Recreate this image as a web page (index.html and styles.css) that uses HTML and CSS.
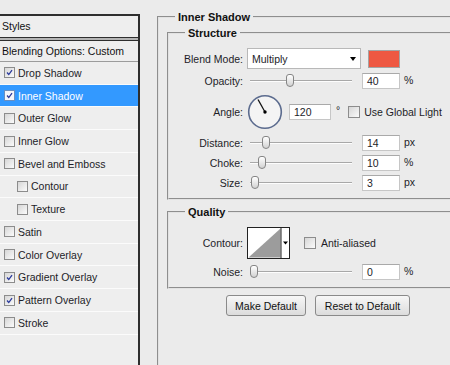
FILE: index.html
```html
<!DOCTYPE html>
<html>
  <head>
    <title>Layer Style - Inner Shadow</title>
    <link rel="stylesheet" href="styles.css">
  </head>
  <body>
    <div class="dialog">
      <div class="styles-panel">
        <div class="panel-title">Styles</div>
        <div class="panel-rule"></div>
        <div class="panel-blending">Blending Options: Custom</div>
        <ul class="effect-list">
          <li class="effect"><span class="check"><svg viewBox="0 0 11 11"><path d="M2.5 5.5 L4.6 8 L8.6 2.6" /></svg></span>Drop Shadow</li>
          <li class="effect selected"><span class="check"><svg viewBox="0 0 11 11"><path d="M2.5 5.5 L4.6 8 L8.6 2.6" /></svg></span>Inner Shadow</li>
          <li class="effect"><span class="check"></span>Outer Glow</li>
          <li class="effect"><span class="check"></span>Inner Glow</li>
          <li class="effect"><span class="check"></span>Bevel and Emboss</li>
          <li class="effect sub"><span class="check"></span>Contour</li>
          <li class="effect sub"><span class="check"></span>Texture</li>
          <li class="effect"><span class="check"></span>Satin</li>
          <li class="effect"><span class="check"></span>Color Overlay</li>
          <li class="effect"><span class="check"><svg viewBox="0 0 11 11"><path d="M2.5 5.5 L4.6 8 L8.6 2.6" /></svg></span>Gradient Overlay</li>
          <li class="effect"><span class="check"><svg viewBox="0 0 11 11"><path d="M2.5 5.5 L4.6 8 L8.6 2.6" /></svg></span>Pattern Overlay</li>
          <li class="effect"><span class="check"></span>Stroke</li>
        </ul>
      </div>

      <div class="settings">
        <fieldset class="group group-main">
          <legend>Inner Shadow</legend>

          <fieldset class="group group-inner group-structure">
            <legend>Structure</legend>
            <div class="row row-blend">
              <span class="row-label">Blend Mode:</span>
              <div class="select"><span>Multiply</span><span class="select-arrow"></span></div>
              <span class="swatch"></span>
            </div>
            <div class="row row-slider">
              <span class="row-label">Opacity:</span>
              <div class="slider"><span class="thumb" style="left: 39px"></span></div>
              <span class="field">40</span>
              <span class="unit">%</span>
            </div>
            <div class="row row-angle">
              <span class="row-label">Angle:</span>
              <svg class="dial" width="36" height="36" viewBox="0 0 36 36">
                <circle cx="18" cy="18" r="16.3" fill="#f4f4f4" stroke="#5b6b8e" stroke-width="1.6" />
                <line x1="18" y1="18" x2="11" y2="5.5" stroke="#111" stroke-width="1.3" />
                <circle cx="18" cy="18" r="1.7" fill="#000" />
              </svg>
              <span class="field field-angle">120</span>
              <span class="degree">&deg;</span>
              <span class="check check-inline"></span>
              <span class="check-label">Use Global Light</span>
            </div>
            <div class="row row-slider">
              <span class="row-label">Distance:</span>
              <div class="slider"><span class="thumb" style="left: 15px"></span></div>
              <span class="field">14</span>
              <span class="unit">px</span>
            </div>
            <div class="row row-slider">
              <span class="row-label">Choke:</span>
              <div class="slider"><span class="thumb" style="left: 11px"></span></div>
              <span class="field">10</span>
              <span class="unit">%</span>
            </div>
            <div class="row row-slider">
              <span class="row-label">Size:</span>
              <div class="slider"><span class="thumb" style="left: 4px"></span></div>
              <span class="field">3</span>
              <span class="unit">px</span>
            </div>
          </fieldset>

          <fieldset class="group group-inner group-quality">
            <legend>Quality</legend>
            <div class="row row-contour">
              <span class="row-label">Contour:</span>
              <svg class="contour" width="43" height="32" viewBox="0 0 43 32">
                <rect x="0.5" y="0.5" width="42" height="31" fill="#fff" stroke="#222" />
                <polygon points="1.5,30.5 33.5,1.5 33.5,30.5" fill="#9c9c9c" />
                <line x1="34" y1="0" x2="34" y2="32" stroke="#222" />
                <polygon points="36,14.5 41,14.5 38.5,17.5" fill="#000" />
              </svg>
              <span class="check check-inline check-anti"></span>
              <span class="check-label anti-label">Anti-aliased</span>
            </div>
            <div class="row row-slider">
              <span class="row-label">Noise:</span>
              <div class="slider"><span class="thumb" style="left: 3px"></span></div>
              <span class="field">0</span>
              <span class="unit">%</span>
            </div>
          </fieldset>

          <div class="buttons">
            <button class="btn btn-make">Make Default</button>
            <button class="btn btn-reset">Reset to Default</button>
          </div>
        </fieldset>
      </div>
    </div>
  </body>
</html>
```

FILE: styles.css
```css
html,
body {
  margin: 0;
  padding: 0;
  width: 450px;
  height: 365px;
  overflow: hidden;
}

body {
  font-family: "Liberation Sans", Arial, sans-serif;
  font-size: 10.5px;
  color: #1d1d28;
  background-color: #ebebeb;
}

.dialog {
  display: flex;
  height: 365px;
  overflow: hidden;
}

/* Styles list on the left */
.styles-panel {
  width: 140px;
  flex: none;
  margin-top: 14px;
  border-top: 2px solid #2e2e2e;
  border-right: 2px solid #2e2e2e;
  box-sizing: border-box;
  background-color: #eeeeee;
}

.panel-title {
  height: 21px;
  line-height: 21px;
  padding-left: 2px;
  color: #111;
}

.panel-rule {
  height: 2px;
  background-color: #b4b4b4;
  border-top: 1px solid #2e2e2e;
  border-bottom: 1px solid #2e2e2e;
}

.panel-blending {
  height: 20px;
  line-height: 20px;
  padding-left: 2px;
  border-bottom: 1px solid #9c9c9c;
  color: #111;
}

.effect-list {
  list-style: none;
  margin: 0;
  padding: 0;
}

.effect {
  display: flex;
  align-items: center;
  height: 21.73px;
  border-bottom: 1px solid #fbfbfb;
  padding-left: 4px;
}

.effect.sub {
  padding-left: 17px;
}

.effect.selected {
  background-color: #3399ff;
  color: #fff;
}

.check {
  width: 9px;
  height: 9px;
  flex: none;
  border: 1px solid #8c8c8c;
  background: linear-gradient(135deg, #d6d6d6, #fbfbfb);
  margin-right: 3px;
  display: flex;
}

.check svg {
  width: 9px;
  height: 9px;
}

.check path {
  fill: none;
  stroke: #2b3a9c;
  stroke-width: 1.6;
}

.selected .check {
  border-color: #6a8fc0;
  background: #f4f6fb;
}

/* Settings on the right */
.settings {
  margin-left: 17px;
  width: 310px;
  flex: none;
}

.group {
  margin: 0;
  padding: 0;
  border: 2px groove #e2e2e2;
  min-width: 0;
}

.group legend {
  font-size: 11px;
  font-weight: bold;
  line-height: 14px;
  padding: 0 3px;
  margin-left: 16px;
  color: #111;
}

.group-main {
  margin-top: 10px;
  height: 355px;
  box-sizing: border-box;
  border-bottom-width: 0;
}

.group-inner {
  margin-left: 8px;
}

.group-structure {
  margin-top: 2px;
  padding: 8px 0 7px;
}

.group-quality {
  margin-top: 5px;
  padding: 8px 0 7px;
}

.row {
  display: flex;
  align-items: center;
}

.row-label {
  width: 74px;
  margin-right: 4px;
  text-align: right;
  flex: none;
}

.row-blend {
  height: 21px;
}

.select {
  width: 114px;
  height: 21px;
  box-sizing: border-box;
  border: 1px solid #b8b8b8;
  background-color: #fff;
  display: flex;
  align-items: center;
  justify-content: space-between;
  padding: 0 4px 0 4px;
}

.select-arrow {
  width: 0;
  height: 0;
  border-left: 3.5px solid transparent;
  border-right: 3.5px solid transparent;
  border-top: 4px solid #000;
}

.swatch {
  width: 32px;
  height: 18px;
  box-sizing: border-box;
  margin-left: 7px;
  background-color: #ee5842;
  border: 1px solid #a4a4a4;
}

.row-slider {
  height: 16px;
  margin-top: 4px;
}

.slider {
  position: relative;
  width: 107px;
  height: 16px;
  flex: none;
}

.slider::before {
  content: "";
  position: absolute;
  left: 3px;
  width: 102px;
  top: 7px;
  height: 1px;
  background-color: #a8a8a8;
  border-bottom: 1px solid #fdfdfd;
}

.thumb {
  position: absolute;
  top: 1px;
  width: 6px;
  height: 11px;
  border: 1px solid #858585;
  border-radius: 3px 3px 4px 4px;
  background: linear-gradient(#ffffff, #d2d2d2);
}

.field {
  width: 38px;
  height: 16px;
  box-sizing: border-box;
  margin-left: 8px;
  padding-left: 4px;
  line-height: 14px;
  background-color: #fff;
  border: 1px solid #c6c6c6;
  border-top-color: #a9a9a9;
  flex: none;
}

.unit {
  margin-left: 4px;
  margin-bottom: 3px;
}

.row-angle {
  height: 36px;
  margin-top: 5px;
}

.row-angle + .row-slider {
  margin-top: 5px;
}

.dial {
  flex: none;
}

.field-angle {
  width: 42px;
  margin-left: 6px;
}

.degree {
  margin-left: 5px;
  margin-bottom: 5px;
}

.check-inline {
  margin-left: 8px;
  width: 10px;
  height: 10px;
  margin-right: 0;
}

.check-label {
  margin-left: 4px;
}

.row-contour {
  height: 32px;
}

.contour {
  flex: none;
}

.check-anti {
  margin-left: 14px;
}

.anti-label {
  margin-left: 5px;
}

.row-contour + .row-slider {
  margin-top: 5px;
}

.buttons {
  display: flex;
  margin: 6px 0 0 67px;
  gap: 9px;
}

.btn {
  height: 21px;
  padding: 0;
  font-family: "Liberation Sans", Arial, sans-serif;
  font-size: 10.5px;
  color: #111;
  border: 1px solid #8a8a8a;
  border-radius: 3px;
  background: linear-gradient(#f7f7f7, #dcdcdc);
}

.btn-make {
  width: 80px;
}

.btn-reset {
  width: 95px;
}
```
